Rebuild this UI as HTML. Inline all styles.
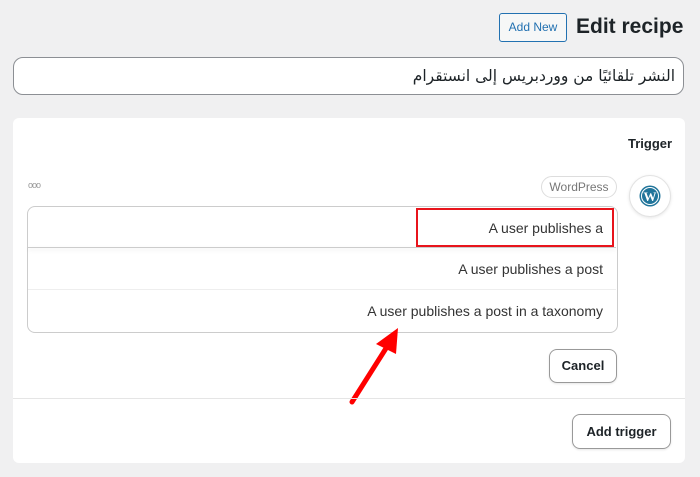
<!DOCTYPE html>
<html><head><meta charset="utf-8"><style>
body{margin:0;width:700px;height:477px;background:#f0f0f1;font-family:"Liberation Sans",sans-serif;position:relative;overflow:hidden;color:#1d2327}
.abs{position:absolute}
</style></head><body>
<div class="abs" style="left:499px;top:13px;width:66px;height:27px;border:1px solid #2271b1;border-radius:3px;background:#f6f7f7;color:#2271b1;font-size:12px;line-height:27px;text-align:center">Add New</div>
<div class="abs" style="left:576px;top:12px;font-size:21px;font-weight:bold;line-height:30px">Edit recipe</div>
<div class="abs" style="left:13px;top:57px;width:669px;height:36px;border:1px solid #8c8f94;border-radius:10px;background:#fff"></div>
<div class="abs" dir="rtl" style="right:25px;top:64px;font-family:'DejaVu Sans',sans-serif;font-size:15.5px;line-height:24px">النشر تلقائيًا من ووردبريس إلى انستقرام</div>
<div class="abs" style="left:13px;top:118px;width:672px;height:345px;background:#fff;border-radius:6px"></div>
<div class="abs" style="left:628px;top:136px;font-size:13px;font-weight:bold">Trigger</div>
<div class="abs" style="left:28px;top:180px;font-size:9px;color:#999;letter-spacing:-1px">ooo</div>
<div class="abs" style="left:541px;top:176px;width:74px;height:20px;border:1px solid #ddd;border-radius:11px;color:#777;font-size:12px;line-height:20px;text-align:center">WordPress</div>
<div class="abs" style="left:629px;top:175px;width:40px;height:40px;border-radius:50%;border:1px solid #e3e3e3;background:#fff;box-shadow:0 1px 3px rgba(0,0,0,.1)"></div>
<svg class="abs" style="left:639px;top:185px" width="22" height="22" viewBox="0 0 22 22"><circle cx="11" cy="11" r="10.5" fill="#21759b"/><circle cx="11" cy="11" r="8.5" fill="none" stroke="#fff" stroke-width="1"/><text x="11" y="16" text-anchor="middle" font-family="Liberation Serif" font-weight="bold" font-size="13" fill="#fff">W</text></svg>
<div class="abs" style="left:27px;top:206px;width:589px;height:125px;border:1px solid #ccc;border-radius:8px;background:#fff"></div>
<div class="abs" style="left:28px;top:247px;width:588px;height:1px;background:#ccc;box-shadow:0 2px 4px rgba(0,0,0,.12)"></div>
<div class="abs" style="left:28px;top:289px;width:588px;height:1px;background:#eee"></div>
<div class="abs" style="left:416px;top:208px;width:198px;height:39px;border:2px solid #e8141c;box-sizing:border-box"></div>
<div class="abs" style="right:97px;top:220px;font-size:14px;color:#333">A user publishes a</div>
<div class="abs" style="right:97px;top:261px;font-size:14px;color:#333">A user publishes a post</div>
<div class="abs" style="right:97px;top:303px;font-size:14px;color:#333">A user publishes a post in a taxonomy</div>
<svg class="abs" style="left:340px;top:320px" width="70" height="90"><line x1="12" y1="82" x2="50" y2="22" stroke="#f00" stroke-width="5" stroke-linecap="round"/><polygon points="58,8 36,24 56,34" fill="#f00"/></svg>
<div class="abs" style="left:549px;top:349px;width:66px;height:32px;border:1px solid #999;border-radius:8px;font-size:13px;font-weight:bold;line-height:32px;text-align:center;box-shadow:0 1px 2px rgba(0,0,0,.1)">Cancel</div>
<div class="abs" style="left:13px;top:398px;width:672px;height:1px;background:#e5e5e5"></div>
<div class="abs" style="left:572px;top:414px;width:97px;height:33px;border:1px solid #999;border-radius:8px;font-size:13px;font-weight:bold;line-height:33px;text-align:center;box-shadow:0 1px 2px rgba(0,0,0,.1)">Add trigger</div>
</body></html>
